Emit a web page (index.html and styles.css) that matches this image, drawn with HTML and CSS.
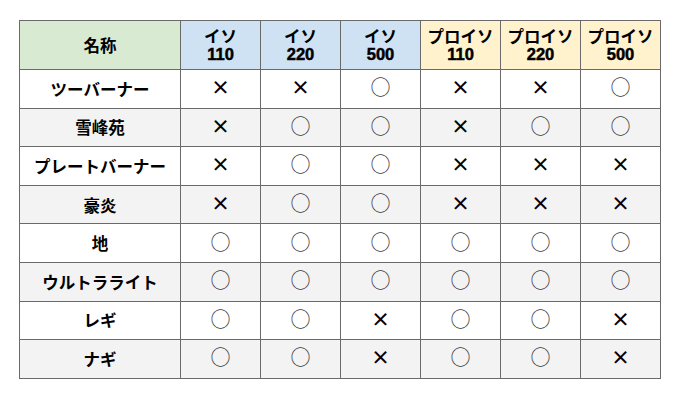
FILE: index.html
```html
<!DOCTYPE html>
<html lang="ja">
<head>
<meta charset="utf-8">
<link rel="stylesheet" href="styles.css">
</head>
<body>
<table class="grid">
  <colgroup>
    <col class="c-name"><col class="c-val"><col class="c-val"><col class="c-val"><col class="c-val"><col class="c-val"><col class="c-val">
  </colgroup>
  <thead>
    <tr>
      <th class="h-name">名称</th>
      <th class="h-iso"><span class="hl">イソ</span><span class="hl num">110</span></th>
      <th class="h-iso"><span class="hl">イソ</span><span class="hl num">220</span></th>
      <th class="h-iso"><span class="hl">イソ</span><span class="hl num">500</span></th>
      <th class="h-pro"><span class="hl">プロイソ</span><span class="hl num">110</span></th>
      <th class="h-pro"><span class="hl">プロイソ</span><span class="hl num">220</span></th>
      <th class="h-pro"><span class="hl">プロイソ</span><span class="hl num">500</span></th>
    </tr>
  </thead>
  <tbody>
    <tr><th>ツーバーナー</th><td class="x">×</td><td class="x">×</td><td class="o">○</td><td class="x">×</td><td class="x">×</td><td class="o">○</td></tr>
    <tr class="alt"><th>雪峰苑</th><td class="x">×</td><td class="o">○</td><td class="o">○</td><td class="x">×</td><td class="o">○</td><td class="o">○</td></tr>
    <tr><th>プレートバーナー</th><td class="x">×</td><td class="o">○</td><td class="o">○</td><td class="x">×</td><td class="x">×</td><td class="x">×</td></tr>
    <tr class="alt"><th>豪炎</th><td class="x">×</td><td class="o">○</td><td class="o">○</td><td class="x">×</td><td class="x">×</td><td class="x">×</td></tr>
    <tr><th>地</th><td class="o">○</td><td class="o">○</td><td class="o">○</td><td class="o">○</td><td class="o">○</td><td class="o">○</td></tr>
    <tr class="alt"><th>ウルトラライト</th><td class="o">○</td><td class="o">○</td><td class="o">○</td><td class="o">○</td><td class="o">○</td><td class="o">○</td></tr>
    <tr><th>レギ</th><td class="o">○</td><td class="o">○</td><td class="x">×</td><td class="o">○</td><td class="o">○</td><td class="x">×</td></tr>
    <tr class="alt"><th>ナギ</th><td class="o">○</td><td class="o">○</td><td class="x">×</td><td class="o">○</td><td class="o">○</td><td class="x">×</td></tr>
  </tbody>
</table>
</body>
</html>
```

FILE: styles.css
```css
html, body {
  margin: 0;
  padding: 0;
  background: #ffffff;
}
body {
  padding: 20px 0 0 19px;
  font-family: "Noto Sans CJK JP", sans-serif;
  color: #000000;
}
.grid {
  border-collapse: collapse;
  table-layout: fixed;
  width: 642px;
}
.c-name { width: 161px; }
.c-val { width: 80px; }
.grid th, .grid td {
  border: 1px solid #6a6a6a;
  text-align: center;
  vertical-align: middle;
  padding: 0;
  font-size: 16.5px;
  line-height: 18px;
}
.grid th {
  font-weight: bold;
}
.hl {
  display: block;
  height: 18px;
  line-height: 18px;
}
.num {
  font-family: "Liberation Sans", Arial, sans-serif;
  font-weight: 700;
  font-size: 16.5px;
  line-height: 18px;
  color: #000000;
  -webkit-text-stroke: 0.5px #000000;
}
.grid thead tr { height: 49px; }
.grid tbody tr { height: 38.6px; }
.h-name { background: #d9ead3; }
.h-iso { background: #cfe2f3; }
.h-pro { background: #fff2cc; }
.alt th, .alt td { background: #f3f3f3; }
.grid td.o {
  font-family: "Noto Sans CJK JP", sans-serif;
  font-size: 20px;
  color: #3a3a3a;
  padding-bottom: 3px;
}
.grid td.x {
  font-family: "Noto Sans CJK JP", sans-serif;
  font-size: 19px;
  font-weight: bold;
  padding-bottom: 3px;
}
```
